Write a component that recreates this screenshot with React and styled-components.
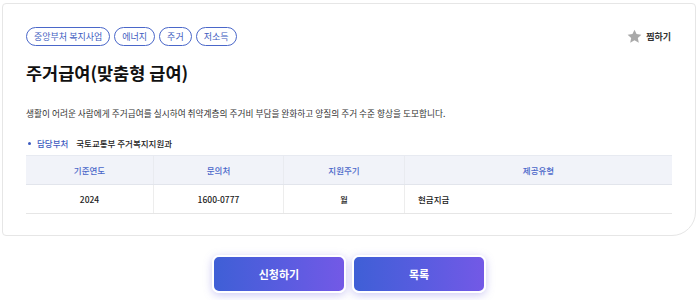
import React from 'react'
import styled, { createGlobalStyle } from 'styled-components'

const Global = createGlobalStyle`
  body {
    margin: 0;
    background: #fff;
    font-family: "Noto Sans CJK KR", "Noto Sans", sans-serif;
    color: #222;
  }
`

const Page = styled.div`
  width: 700px;
  height: 300px;
  box-sizing: border-box;
  padding: 3px 4px 0 2px;
  display: flex;
  flex-direction: column;
`

const Card = styled.section`
  box-sizing: border-box;
  height: 233px;
  border: 1px solid #e6e6e6;
  border-radius: 4px 4px 24px 4px;
  padding: 23px 23px 0 23px;
  background: #fff;
`

const TopRow = styled.div`
  display: flex;
  justify-content: space-between;
  align-items: center;
`

const Tags = styled.div`
  display: flex;
  gap: 4px;
`

const Tag = styled.span`
  box-sizing: border-box;
  height: 19px;
  padding: 0 7px;
  border: 1px solid #4a67c9;
  border-radius: 10px;
  color: #3d5bc0;
  font-size: 9px;
  display: flex;
  align-items: center;
`

const Like = styled.button`
  border: 0;
  background: none;
  padding: 0;
  margin-right: 1px;
  display: flex;
  align-items: center;
  gap: 4px;
  font-family: inherit;
  font-size: 9px;
  font-weight: 700;
  color: #333;
`

const Title = styled.h1`
  margin: 15px 0 0;
  font-size: 17.5px;
  font-weight: 700;
  line-height: 24px;
  color: #111;
`

const Desc = styled.p`
  margin: 22px 0 0;
  font-size: 8.7px;
  line-height: 14px;
  color: #333;
`

const Dept = styled.div`
  margin-top: 15px;
  display: flex;
  align-items: center;
  font-size: 8.5px;
  font-weight: 500;
  line-height: 14px;
  color: #222;
`

const Bullet = styled.span`
  width: 3px;
  height: 3px;
  border-radius: 50%;
  background: #3d5bc0;
  margin: 0 6px 0 2px;
`

const DeptLabel = styled.span`
  color: #3d5bc0;
  margin-right: 8px;
`

const Table = styled.table`
  margin-top: 5px;
  width: 100%;
  border-collapse: collapse;
  table-layout: fixed;
  font-size: 8.5px;
`

const Th = styled.th`
  height: 28px;
  padding: 0;
  background: #f1f3f9;
  color: #4a67c9;
  font-weight: 500;
  border-top: 1px solid #e7eaf1;
  border-bottom: 1px solid #e2e5ec;
  border-left: ${p => (p.$first ? 'none' : '1px solid #e9ebf0')};
  width: ${p => p.$w}px;
`

const Td = styled.td`
  height: 28px;
  padding: 0 ${p => (p.$left ? '13px' : '0')};
  text-align: ${p => (p.$left ? 'left' : 'center')};
  color: #222;
  font-weight: 500;
  border-bottom: 1px solid #e6e6e6;
  border-left: ${p => (p.$first ? 'none' : '1px solid #ededed')};
`

const Actions = styled.div`
  margin-top: 19px;
  display: flex;
  justify-content: center;
  gap: 6px;
`

const Button = styled.button`
  box-sizing: border-box;
  width: 134px;
  height: 38px;
  border: 2px solid #fff;
  border-radius: 7px;
  background: linear-gradient(90deg, #3f5fd6 0%, #5a5ce0 55%, #7359e6 100%);
  box-shadow: 0 2px 8px rgba(110, 100, 220, 0.35);
  color: #fff;
  font-family: inherit;
  font-size: 11px;
  font-weight: 700;
`

const Star = () => (
  <svg width="15" height="15" viewBox="0 0 24 24">
    <path
      d="M12 1l3.3 7.1 7.7.9-5.7 5.2 1.6 7.6L12 17.9l-6.9 3.9 1.6-7.6L1 9l7.7-.9z"
      fill="#a9a9a9"
    />
  </svg>
)

const tags = ['중앙부처 복지사업', '에너지', '주거', '저소득']
const cols = [
  { label: '기준연도', w: 127 },
  { label: '문의처', w: 129 },
  { label: '지원주기', w: 120 },
  { label: '제공유형' }
]

export default function App() {
  return (
    <Page>
      <Global />
      <Card>
        <TopRow>
          <Tags>
            {tags.map(t => (
              <Tag key={t}>{t}</Tag>
            ))}
          </Tags>
          <Like>
            <Star />
            찜하기
          </Like>
        </TopRow>
        <Title>주거급여(맞춤형 급여)</Title>
        <Desc>
          생활이 어려운 사람에게 주거급여를 실시하여 취약계층의 주거비 부담을 완화하고 양질의 주거 수준 향상을 도모합니다.
        </Desc>
        <Dept>
          <Bullet />
          <DeptLabel>담당부처</DeptLabel>
          국토교통부 주거복지지원과
        </Dept>
        <Table>
          <thead>
            <tr>
              {cols.map((c, i) => (
                <Th key={c.label} $w={c.w} $first={i === 0}>
                  {c.label}
                </Th>
              ))}
            </tr>
          </thead>
          <tbody>
            <tr>
              <Td $first>2024</Td>
              <Td>1600-0777</Td>
              <Td>월</Td>
              <Td $left>현금지급</Td>
            </tr>
          </tbody>
        </Table>
      </Card>
      <Actions>
        <Button>신청하기</Button>
        <Button>목록</Button>
      </Actions>
    </Page>
  )
}
